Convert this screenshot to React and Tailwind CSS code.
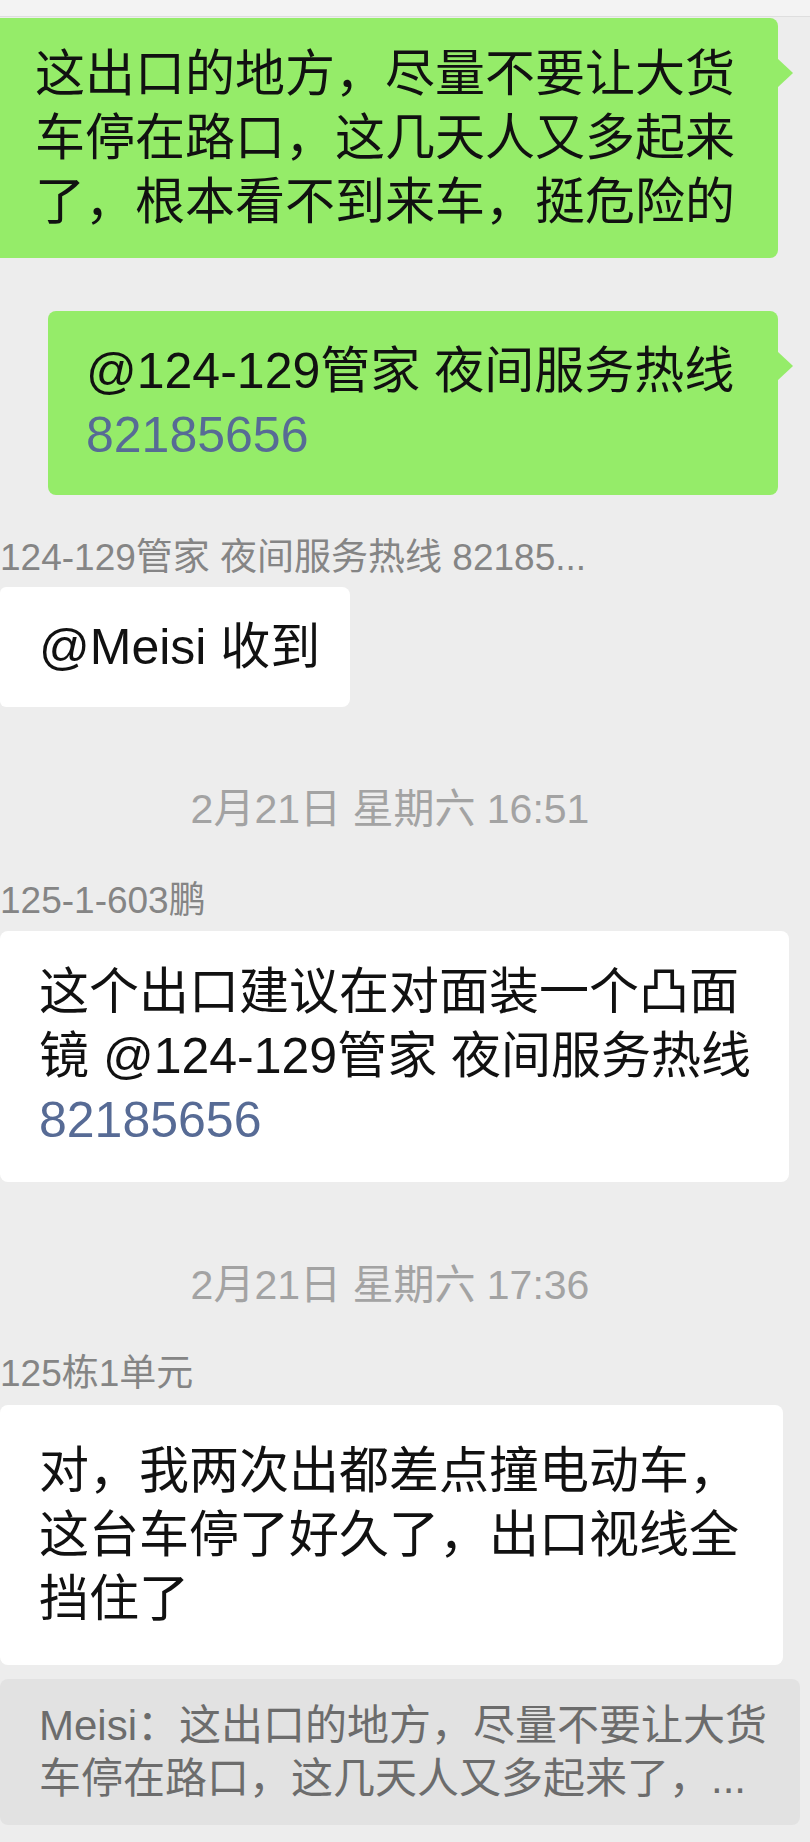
import React from "react";

const font = { fontFamily: '"Liberation Sans", "Noto Sans CJK SC", sans-serif' };

// little triangle on the right side of a sent bubble
const Tail = () => (
  <span className="absolute right-[-15px] top-[40px] w-0 h-0 border-y-[15px] border-y-transparent border-l-[16px] border-l-[#95ec69]" />
);

const Name = ({ children, className = "" }) => (
  <div className={`text-[37px] leading-[44px] text-[#858585] whitespace-nowrap ${className}`}>{children}</div>
);

const Time = ({ children, className = "" }) => (
  <div className={`text-center pr-[30px] text-[41px] leading-[48px] text-[#a3a3a3] ${className}`}>{children}</div>
);

export default function App() {
  return (
    <div className="w-[810px] h-[1842px] overflow-hidden bg-[#ededed] text-[#111]" style={font}>
      <div className="h-[17px] bg-[#f3f3f3] border-b border-[#dedede]" />

      {/* my message 1 */}
      <div className="relative mt-px w-[778px] rounded-r-lg bg-[#95ec69] pl-[35px] py-[24px] text-[50px] leading-[64px]">
        <div>这出口的地方，尽量不要让大货</div>
        <div>车停在路口，这几天人又多起来</div>
        <div>了，根本看不到来车，挺危险的</div>
        <Tail />
      </div>

      {/* my message 2 */}
      <div className="relative mt-[53px] ml-[48px] w-[730px] rounded-lg bg-[#95ec69] pl-[38px] py-[28px] text-[50px] leading-[64px]">
        <div>@124-129管家 夜间服务热线</div>
        <div className="text-[#576b95]">82185656</div>
        <Tail />
      </div>

      <Name className="mt-[41px]">124-129管家 夜间服务热线 82185...</Name>
      <div className="mt-[7px] w-[350px] rounded-r-lg rounded-l-md bg-white pl-[39px] py-[28px] text-[50px] leading-[64px]">
        @Meisi 收到
      </div>

      <Time className="mt-[78px]">2月21日 星期六 16:51</Time>

      <Name className="mt-[46px]">125-1-603鹏</Name>
      <div className="mt-[8px] w-[789px] rounded-lg bg-white pl-[39px] pt-[29px] pb-[30px] text-[50px] leading-[64px]">
        <div>这个出口建议在对面装一个凸面</div>
        <div>镜 @124-129管家 夜间服务热线</div>
        <div className="text-[#576b95]">82185656</div>
      </div>

      <Time className="mt-[79px]">2月21日 星期六 17:36</Time>

      <Name className="mt-[43px]">125栋1单元</Name>
      <div className="mt-[9px] w-[783px] rounded-lg bg-white pl-[39px] py-[34px] text-[50px] leading-[64px]">
        <div>对，我两次出都差点撞电动车，</div>
        <div>这台车停了好久了，出口视线全</div>
        <div>挡住了</div>
      </div>

      <div className="mt-[14px] w-[800px] rounded-lg bg-[#e2e2e2] pl-[39px] py-[20px] text-[42px] leading-[53px] text-[#6c6c6c]">
        <div>Meisi：这出口的地方，尽量不要让大货</div>
        <div>车停在路口，这几天人又多起来了，...</div>
      </div>
    </div>
  );
}
